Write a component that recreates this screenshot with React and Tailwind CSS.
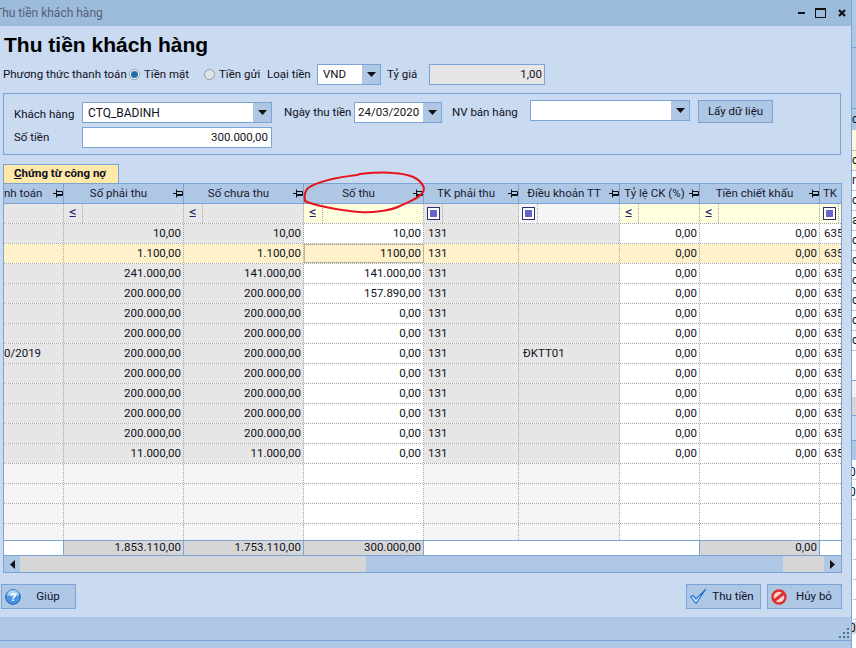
import React from 'react';

const columns = [
    { title: 'nh toán', pin: true, align: 'left' },
    { title: 'Số phải thu', pin: true },
    { title: 'Số chưa thu', pin: true },
    { title: 'Số thu', pin: true },
    { title: 'TK phải thu', pin: true },
    { title: 'Điều khoản TT', pin: true },
    { title: 'Tỷ lệ CK (%)', pin: true },
    { title: 'Tiền chiết khấu', pin: true },
    { title: 'TK', pin: false },
];

const gridCols = 'grid-cols-[60px_120px_120px_120px_95px_101px_80px_120px_23px]';

const rows = [
    ['', '10,00', '10,00', '10,00', '131', ''],
    ['', '1.100,00', '1.100,00', '1100,00', '131', ''],
    ['', '241.000,00', '141.000,00', '141.000,00', '131', ''],
    ['', '200.000,00', '200.000,00', '157.890,00', '131', ''],
    ['', '200.000,00', '200.000,00', '0,00', '131', ''],
    ['', '200.000,00', '200.000,00', '0,00', '131', ''],
    ['0/2019', '200.000,00', '200.000,00', '0,00', '131', 'ĐKTT01'],
    ['', '200.000,00', '200.000,00', '0,00', '131', ''],
    ['', '200.000,00', '200.000,00', '0,00', '131', ''],
    ['', '200.000,00', '200.000,00', '0,00', '131', ''],
    ['', '200.000,00', '200.000,00', '0,00', '131', ''],
    ['', '11.000,00', '11.000,00', '0,00', '131', ''],
];

const PinIcon = () => (
    <svg width="10" height="9" viewBox="0 0 10 9" className="shrink-0">
        <path d="M0 4.500h3.500M3.500 0.500v8M3.500 2.500h6v4h-6" stroke="#111" fill="none" strokeWidth="1" />
        <path d="M3.500 5.500h6" stroke="#111" strokeWidth="1" />
    </svg>
);

const Caret = () => (
    <svg width="9" height="5" viewBox="0 0 9 5"><path d="M0 0h9L4.500 5z" fill="#111" /></svg>
);

const ComboArrow = () => (
    <div className="w-[18px] h-full bg-[#adc7e5] flex items-center justify-center shrink-0">
        <Caret />
    </div>
);

const Radio = ({ on }) => (
    <span className={`w-[11px] h-[11px] rounded-full border border-[#8c9bab] flex items-center justify-center shrink-0 ${on ? 'bg-white' : 'bg-[#e3e3e3]'}`}>
        {on && <span className="w-[7px] h-[7px] rounded-full bg-[#1f6ea8]" />}
    </span>
);

const FilterLe = () => (
    <span className="w-[19px] h-full border-r border-dotted border-[#a8a8a8] flex items-start justify-center text-[15px] leading-[17px] text-[#24246b] shrink-0">≤</span>
);

const FilterBox = () => (
    <span className="w-[19px] h-full border-r border-dotted border-[#a8a8a8] flex items-center pl-[3px] shrink-0">
        <span className="w-[13px] h-[13px] border border-[#2f2f6f] bg-white flex items-center justify-center">
            <span className="w-[7px] h-[7px] bg-[#6464cc]" />
        </span>
    </span>
);

const GridHeader = () => (
    <div className={`grid ${gridCols} h-[20px] bg-[#adc7e5] border-b border-[#7ba3d3]`}>
        {columns.map((col, i) => (
            <div key={i} className="flex items-center border-r border-[#7ba3d3] last:border-r-0 overflow-hidden text-[#1a1a2e]">
                <span className={`flex-1 whitespace-nowrap ${col.align === 'left' ? 'text-left' : 'text-center'} ${col.pin ? '' : 'pl-[3px] text-left'}`}>{col.title}</span>
                {col.pin && <PinIcon />}
            </div>
        ))}
    </div>
);

const GridFilter = () => {
    const bg = ['bg-[#e6e6e6]', 'bg-[#e6e6e6]', 'bg-[#e6e6e6]', 'bg-[#ffffdf]', 'bg-[#e6e6e6]', 'bg-[#f5f5f5]', 'bg-[#ffffdf]', 'bg-[#ffffdf]', 'bg-[#ffffdf]'];
    const kinds = ['', 'le', 'le', 'le', 'box', 'box', 'le', 'le', 'box'];
    return (
        <div className={`grid ${gridCols} h-[19px]`}>
            {kinds.map((k, i) => (
                <div key={i} className={`${bg[i]} flex items-stretch border-r border-dotted border-[#a8a8a8] last:border-r-0 overflow-hidden`}>
                    {k === 'le' && <FilterLe />}
                    {k === 'box' && <FilterBox />}
                </div>
            ))}
        </div>
    );
};

const GridRow = ({ row, active }) => {
    const cells = [...row, '0,00', '0,00', '635'];
    const greyCols = [0, 1, 2, 4, 5];
    return (
        <div className={`grid ${gridCols} h-[20px] border-t border-dotted border-[#a8a8a8]`}>
            {cells.map((text, i) => {
                const bg = active ? 'bg-[#fff2cb]' : greyCols.includes(i) ? 'bg-[#e6e6e6]' : 'bg-white';
                const right = [1, 2, 3, 6, 7].includes(i);
                const selected = active && i === 3 ? 'border border-[#bdb59f]' : 'border-r border-dotted border-[#a8a8a8] last:border-r-0';
                return (
                    <div key={i} className={`${bg} ${selected} flex items-center overflow-hidden whitespace-nowrap pt-[1px] ${right ? 'justify-end pr-[2px]' : i === 0 ? 'pl-0' : 'pl-[4px]'}`}>
                        {text}
                    </div>
                );
            })}
        </div>
    );
};

const EmptyRow = ({ h }) => (
    <div className={`grid ${gridCols} ${h} border-t border-dotted border-[#a8a8a8]`}>
        {columns.map((_, i) => (
            <div key={i} className={`${[0, 1, 2, 4, 5].includes(i) ? 'bg-[#f5f5f5]' : 'bg-white'} border-r border-dotted border-[#a8a8a8] last:border-r-0`} />
        ))}
    </div>
);

const GridFooter = () => {
    const cells = ['', '1.853.110,00', '1.753.110,00', '300.000,00', '', '', '', '0,00', ''];
    return (
        <div className={`grid ${gridCols} h-[15px] border-t border-[#7ba3d3]`}>
            {cells.map((text, i) => (
                <div key={i} className={`${text ? 'bg-[#d6d6d6] justify-end pr-[2px] border-r border-[#7ba3d3]' : 'bg-white'} ${i === 0 || i === 6 ? 'border-r border-[#7ba3d3]' : ''} flex items-center leading-none`}>
                    {text}
                </div>
            ))}
        </div>
    );
};

const ScrollBar = () => (
    <div className="h-[17px] flex bg-[#adc7e5] border-t border-[#7ba3d3]">
        <div className="w-[16px] flex items-center justify-center">
            <svg width="5" height="9" viewBox="0 0 5 9"><path d="M5 0v9L0 4.500z" fill="#111" /></svg>
        </div>
        <div className="w-[346px] bg-[#d6d6d6]" />
        <div className="flex-1" />
        <div className="w-[41px] bg-[#d6d6d6]" />
        <div className="w-[17px] flex items-center justify-center">
            <svg width="5" height="9" viewBox="0 0 5 9"><path d="M0 0v9L5 4.500z" fill="#111" /></svg>
        </div>
    </div>
);

const HelpIcon = () => (
    <svg width="16" height="16" viewBox="0 0 16 16" className="shrink-0">
        <circle cx="8" cy="8" r="7.300" fill="#4a95e6" stroke="#1d5fa8" />
        <path d="M1.800 6a6.300 6 0 0 1 12.400 0c-3 1.500-9 1.500-12.400 0z" fill="#a9d2f7" />
        <text x="8" y="12" textAnchor="middle" fontSize="11" fontWeight="700" fill="#fff" fontFamily="Liberation Sans">?</text>
    </svg>
);

const CheckIcon = () => (
    <svg width="16" height="15" viewBox="0 0 16 15" className="shrink-0">
        <path d="M0.500 7.500l5.500 7L15.500 0.500 6 10 3 6.500z" fill="#e4f0fd" stroke="#1f74d0" strokeWidth="1.200" strokeLinejoin="round" />
    </svg>
);

const BanIcon = () => (
    <svg width="16" height="16" viewBox="0 0 16 16" className="shrink-0">
        <circle cx="8" cy="8" r="6.500" fill="#fbd5cf" stroke="#e0302c" strokeWidth="2.400" />
        <path d="M3.500 11.500l9-7" stroke="#e0302c" strokeWidth="3" />
    </svg>
);

const FooterButton = ({ icon, label, className }) => (
    <div className={`h-[25px] bg-[#adc7e5] border border-[#7ba3d3] flex items-center pl-[3px] ${className}`}>
        {icon}
        <span className="flex-1 text-center text-[#10102a] whitespace-nowrap">{label}</span>
    </div>
);

const sliceLetters = ['c', 'n', 'c', 'a', 'c', 'c', 'c', 'c', 'c', 'c'];

const BehindWindow = () => (
    <div className="flex-1 flex flex-col bg-white overflow-hidden text-[12px]">
        <div className="h-[48px] bg-[#adc7e5] border-b border-[#7ba3d3] shrink-0" />
        <div className="h-[61px] bg-[#adc7e5] border-b border-[#7ba3d3] shrink-0" />
        <div className="h-[21px] bg-[#adc7e5] shrink-0 leading-[21px]">c</div>
        <div className="h-[20px] bg-[#fff8d8] shrink-0" />
        {sliceLetters.map((letter, i) => (
            <div key={i} className={`h-[20px] shrink-0 border-t border-dotted border-[#a8a8a8] leading-[18px] ${i === 0 ? 'bg-[#fff8d8]' : ''}`}>{letter}</div>
        ))}
        <div className="h-[30px] shrink-0 border-t border-dotted border-[#a8a8a8]" />
        <div className="h-[17px] bg-[#f2f2f2] border-t border-[#7ba3d3] shrink-0" />
        <div className="h-[18px] bg-[#d6d6d6] shrink-0" />
        <div className="h-[25px] bg-[#c9daf1] border-t border-[#7ba3d3] shrink-0" />
        <div className="h-[20px] bg-[#adc7e5] border-t border-[#7ba3d3] shrink-0" />
        {[0, 1, 2, 3, 4, 5, 6, 7].map(i => (
            <div key={i} className="h-[20px] shrink-0 ml-[-3px] border-b border-dotted border-[#a8a8a8] leading-[24px]">{i < 2 ? '0' : ''}</div>
        ))}
        <div className="h-[12px] mt-[2px] bg-[#d6d6d6] ml-[-3px] leading-[12px] shrink-0">0</div>
    </div>
);

const App = () => {
    return (
        <div className="relative w-[856px] h-[648px] overflow-hidden flex bg-[#adc7e5] text-[11.5px] text-[#111122] font-['Roboto',sans-serif]">
            <div className="w-[852px] shrink-0 flex flex-col border-r border-[#7ba3d3]">
                {/* Title bar */}
                <div className="h-[26px] bg-[#9dbbdb] flex items-center justify-between pr-[5px] shrink-0">
                    <span className="ml-[-5px] text-[12px] text-[#566078] whitespace-nowrap">Thu tiền khách hàng</span>
                    <div className="flex items-center">
                        <span className="w-[7px] h-[2px] bg-[#111]" />
                        <span className="ml-[10px] w-[11px] h-[10px] border border-[#111] border-t-2" />
                        <svg className="ml-[12px]" width="8" height="8" viewBox="0 0 8 8"><path d="M1 1l6 6M7 1l-6 6" stroke="#111" strokeWidth="2.200" /></svg>
                    </div>
                </div>

                {/* Body */}
                <div className="h-[591px] bg-[#c9daf1] flex flex-col shrink-0">
                    <div className="pl-[4px] pt-[5px] h-[38px] text-[21px] leading-[27px] font-bold text-black whitespace-nowrap font-['Liberation_Sans',sans-serif]">Thu tiền khách hàng</div>

                    {/* Payment row */}
                    <div className="flex items-center h-[21px] pl-[3px] whitespace-nowrap">
                        <span className="w-[126px]">Phương thức thanh toán</span>
                        <Radio on />
                        <span className="ml-[4px] w-[60px]">Tiền mặt</span>
                        <Radio />
                        <span className="ml-[4px] w-[48px]">Tiền gửi</span>
                        <span className="w-[50px]">Loại tiền</span>
                        <div className="w-[64px] h-[21px] bg-white border border-[#7ba3d3] flex items-center">
                            <span className="flex-1 pl-[5px]">VND</span>
                            <ComboArrow />
                        </div>
                        <span className="ml-[6px] w-[42px]">Tỷ giá</span>
                        <div className="w-[116px] h-[21px] bg-[#e6e6e6] border border-[#7ba3d3] flex items-center justify-end pr-[2px]">1,00</div>
                    </div>

                    {/* Customer group */}
                    <div className="mt-[8px] ml-[3px] w-[838px] h-[62px] border border-[#7ba3d3] flex flex-col pl-[10px] pt-[8px] gap-[5px] whitespace-nowrap">
                        <div className="flex items-start h-[20px]">
                            <span className="w-[68px] pt-[4px]">Khách hàng</span>
                            <div className="w-[190px] h-[21px] bg-white border border-[#7ba3d3] flex items-center">
                                <span className="flex-1 pl-[5px] text-[12px]">CTQ_BADINH</span>
                                <ComboArrow />
                            </div>
                            <span className="ml-[12px] w-[70px] pt-[2px]">Ngày thu tiền</span>
                            <div className="w-[88px] h-[21px] bg-white border border-[#7ba3d3] flex items-center">
                                <span className="flex-1 pl-[3px]">24/03/2020</span>
                                <ComboArrow />
                            </div>
                            <span className="ml-[10px] w-[78px] pt-[2px]">NV bán hàng</span>
                            <div className="w-[160px] h-[21px] -mt-[2px] bg-white border border-[#7ba3d3] flex items-center">
                                <span className="flex-1" />
                                <ComboArrow />
                            </div>
                            <div className="ml-[8px] w-[75px] h-[23px] -mt-[2px] bg-[#adc7e5] border border-[#7ba3d3] flex items-center justify-center">Lấy dữ liệu</div>
                        </div>
                        <div className="flex items-center h-[21px]">
                            <span className="w-[68px] pt-[1px]">Số tiền</span>
                            <div className="w-[190px] h-[21px] bg-white border border-[#7ba3d3] flex items-center justify-end pr-[3px]">300.000,00</div>
                        </div>
                    </div>

                    {/* Tab */}
                    <div className="mt-[9px] ml-[3px] w-[116px] h-[19px] bg-[#ffe9a8] border border-b-0 border-[#7ba3d3] flex items-center pl-[10px] font-bold whitespace-nowrap">
                        <span><span className="underline">C</span>hứng từ công nợ</span>
                    </div>

                    {/* Grid */}
                    <div className="ml-[3px] w-[839px] h-[390px] border border-[#7ba3d3] flex flex-col overflow-hidden bg-white">
                        <GridHeader />
                        <GridFilter />
                        {rows.map((row, i) => (
                            <GridRow key={i} row={row} active={i === 1} />
                        ))}
                        <EmptyRow h="h-[20px]" />
                        <EmptyRow h="h-[20px]" />
                        <EmptyRow h="h-[20px]" />
                        <EmptyRow h="h-[17px]" />
                        <GridFooter />
                        <ScrollBar />
                    </div>

                    {/* Actions */}
                    <div className="mt-[11px] flex items-center pl-[1px] pr-[9px]">
                        <FooterButton icon={<HelpIcon />} label="Giúp" className="w-[75px]" />
                        <div className="flex-1" />
                        <FooterButton icon={<CheckIcon />} label="Thu tiền" className="w-[75px]" />
                        <FooterButton icon={<BanIcon />} label="Hủy bỏ" className="ml-[6px] w-[75px]" />
                    </div>
                </div>

                {/* Status strip */}
                <div className="h-[24px] bg-[#adc7e5] border-b border-[#7ba3d3] shrink-0 flex justify-end items-end pb-[1px] pr-[1px]">
                    <svg width="11" height="11" viewBox="0 0 11 11" fill="#4f6f96">
                        <rect x="8" y="0" width="2" height="2" /><rect x="4" y="4" width="2" height="2" /><rect x="8" y="4" width="2" height="2" />
                        <rect x="0" y="8" width="2" height="2" /><rect x="4" y="8" width="2" height="2" /><rect x="8" y="8" width="2" height="2" />
                    </svg>
                </div>
            </div>

            {/* Window behind, peeking out on the right */}
            <BehindWindow />

            {/* Red marker circled over the header */}
            <svg className="absolute left-[300px] top-[168px] pointer-events-none" width="130" height="48" viewBox="0 0 130 48" fill="none">
                <path d="M8 20C20 12 40 9 57 7L60 6C70 5 85 4 93 5C108 6 120 9 124 20C124 28 113 32 100 38C90 43 70 45 60 44C45 43 15 38 5 33C4 27 5 23 8 20Z" stroke="#e8141c" strokeWidth="2" />
            </svg>
        </div>
    );
};

export default App;
